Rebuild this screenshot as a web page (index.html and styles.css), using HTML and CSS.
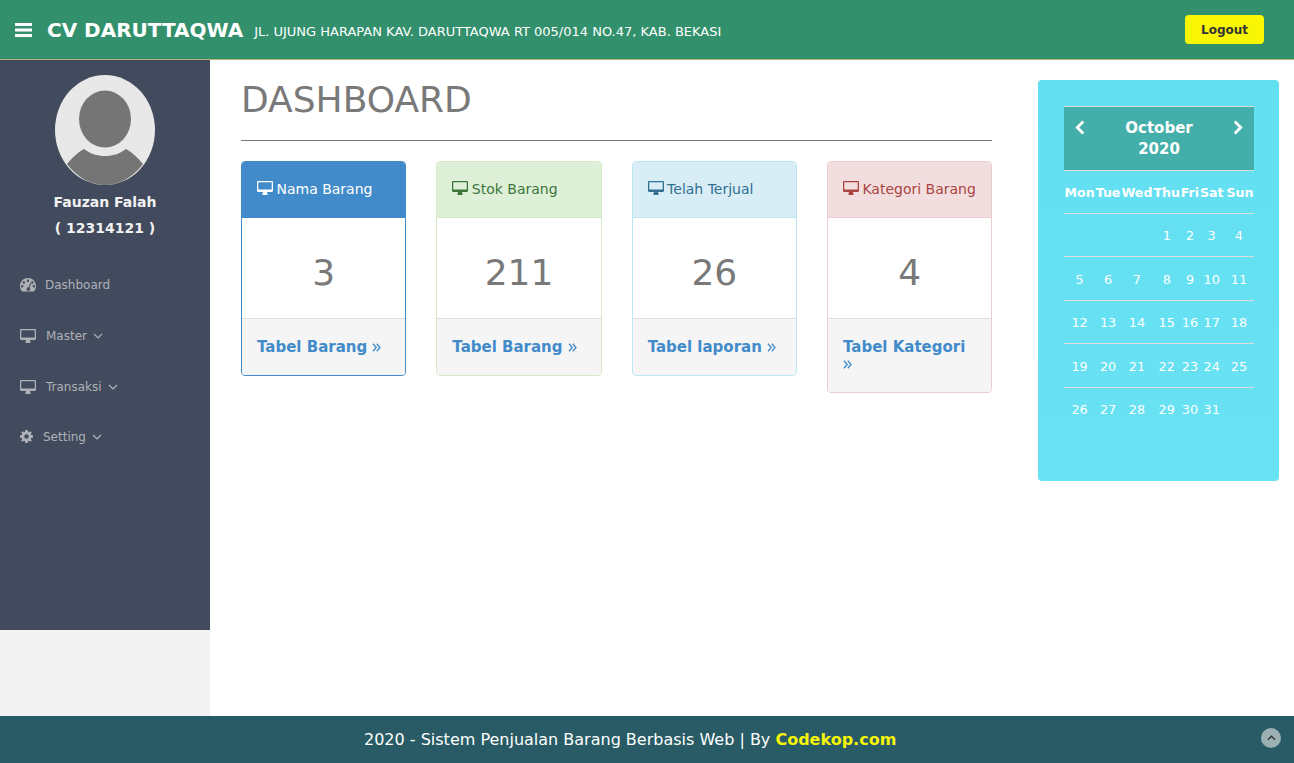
FILE: index.html
```html
<!DOCTYPE html>
<html lang="en">
<head>
    <meta charset="UTF-8">
    <meta name="viewport" content="width=device-width, initial-scale=1.0">
    <title>CV Daruttaqwa - Dashboard</title>
    <link rel="stylesheet" href="styles.css">
</head>
<body>
    <svg class="icon-defs" width="0" height="0">
        <symbol id="i-desktop" viewBox="0 0 16 14">
            <path d="M1.2 0h13.6c.7 0 1.2.5 1.2 1.2v8.6c0 .7-.5 1.2-1.2 1.2H10c0 .8.3 1.3.6 1.8.2.4 0 1.2-.6 1.2H6c-.6 0-.8-.8-.6-1.2.3-.5.6-1 .6-1.8H1.2C.5 11 0 10.500 0 9.800V1.200C0 .5.500 0 1.200 0zM1.300 1.300v7.200h13.400V1.300z" fill-rule="evenodd"/>
        </symbol>
    </svg>

    <header class="topbar">
        <svg class="burger" viewBox="0 0 17 14"><path d="M0 0h17v3H0zM0 5.500h17v3H0zM0 11h17v3H0z"/></svg>
        <span class="brand">CV DARUTTAQWA</span>
        <span class="address">JL. UJUNG HARAPAN KAV. DARUTTAQWA RT 005/014 NO.47, KAB. BEKASI</span>
        <a class="logout" href="#">Logout</a>
    </header>

    <div class="page">
        <aside class="sidebar">
            <div class="sidebar-inner">
                <svg class="avatar" viewBox="0 0 100 110">
                    <ellipse cx="50" cy="55" rx="50" ry="55" fill="#e8e8e8"/>
                    <ellipse cx="50" cy="44" rx="26" ry="28.500" fill="#757575"/>
                    <path d="M12 89C18 82 22 78 29 74C36 79 42 81 50 81C58 81 64 79 71 74C78 78 82 82 88 89C78 102 65 110 50 110C35 110 22 102 12 89Z" fill="#757575"/>
                </svg>
                <p class="user-name">Fauzan Falah</p>
                <p class="user-id">( 12314121 )</p>
                <ul class="menu">
                    <li class="menu-item">
                        <svg class="menu-icon gauge" viewBox="0 0 16 14"><path fill-rule="evenodd" d="M8 0C3.600 0 0 3.500 0 8c0 2.200.8 4.200 2.200 5.600h11.600C15.200 12.200 16 10.200 16 8c0-4.500-3.600-8-8-8zM8 1.500a1.200 1.200 0 1 1 0 2.400 1.200 1.200 0 0 1 0-2.400zM3.800 3.300a1.200 1.200 0 1 1 0 2.400 1.200 1.200 0 0 1 0-2.400zM2.200 7a1.200 1.200 0 1 1 0 2.400 1.200 1.200 0 0 1 0-2.400zM12.300 3.300a1.200 1.200 0 1 1 0 2.400 1.200 1.200 0 0 1 0-2.400zM13.800 7a1.200 1.200 0 1 1 0 2.400 1.200 1.200 0 0 1 0-2.400zM10.200 5.100l1 .4-1.600 4.300c.5.500.8 1.100.6 1.800-.3 1-1.300 1.500-2.300 1.200s-1.500-1.300-1.200-2.300c.3-.9 1.100-1.400 2-1.300z"/></svg>
                        <span>Dashboard</span>
                    </li>
                    <li class="menu-item">
                        <svg class="menu-icon"><use href="#i-desktop"/></svg>
                        <span>Master</span>
                        <svg class="caret" viewBox="0 0 10 6"><path d="M1 1l4 4 4-4"/></svg>
                    </li>
                    <li class="menu-item">
                        <svg class="menu-icon"><use href="#i-desktop"/></svg>
                        <span>Transaksi</span>
                        <svg class="caret" viewBox="0 0 10 6"><path d="M1 1l4 4 4-4"/></svg>
                    </li>
                    <li class="menu-item">
                        <svg class="menu-icon cog" viewBox="0 0 14 14"><path fill-rule="evenodd" d="M5.700 0h2.600l.4 1.900 1 .4L11.400 1.300l1.300 1.300-1 1.700.4 1 1.900.4v2.600l-1.900.4-.4 1 1 1.700-1.300 1.300-1.700-1-1 .4L8.300 14H5.700l-.4-1.900-1-.4-1.700 1-1.300-1.300 1-1.700-.4-1L0 8.300V5.700l1.900-.4.4-1-1-1.700 1.300-1.300 1.700 1 1-.4zM7 4.600a2.400 2.400 0 1 0 0 4.800 2.400 2.400 0 0 0 0-4.800z"/></svg>
                        <span>Setting</span>
                        <svg class="caret" viewBox="0 0 10 6"><path d="M1 1l4 4 4-4"/></svg>
                    </li>
                </ul>
            </div>
        </aside>

        <main class="content">
            <h1 class="title">DASHBOARD</h1>
            <hr class="rule">
            <section class="cards">
                <div class="card card-primary">
                    <div class="card-head"><svg class="head-icon"><use href="#i-desktop"/></svg> Nama Barang</div>
                    <div class="card-body">3</div>
                    <div class="card-foot"><a href="#">Tabel Barang <svg class="dbl" viewBox="0 0 9 9"><path d="M1 .8l3.200 3.700L1 8.200M4.800 .8L8 4.500 4.800 8.200"/></svg></a></div>
                </div>
                <div class="card card-success">
                    <div class="card-head"><svg class="head-icon"><use href="#i-desktop"/></svg> Stok Barang</div>
                    <div class="card-body">211</div>
                    <div class="card-foot"><a href="#">Tabel Barang <svg class="dbl" viewBox="0 0 9 9"><path d="M1 .8l3.200 3.700L1 8.200M4.800 .8L8 4.500 4.800 8.200"/></svg></a></div>
                </div>
                <div class="card card-info">
                    <div class="card-head"><svg class="head-icon"><use href="#i-desktop"/></svg> Telah Terjual</div>
                    <div class="card-body">26</div>
                    <div class="card-foot"><a href="#">Tabel laporan <svg class="dbl" viewBox="0 0 9 9"><path d="M1 .8l3.200 3.700L1 8.200M4.800 .8L8 4.500 4.800 8.200"/></svg></a></div>
                </div>
                <div class="card card-danger">
                    <div class="card-head"><svg class="head-icon"><use href="#i-desktop"/></svg> Kategori Barang</div>
                    <div class="card-body">4</div>
                    <div class="card-foot"><a href="#">Tabel Kategori <svg class="dbl" viewBox="0 0 9 9"><path d="M1 .8l3.200 3.700L1 8.200M4.800 .8L8 4.500 4.800 8.200"/></svg></a></div>
                </div>
            </section>
        </main>

        <aside class="calendar-col">
            <div class="calendar">
                <div class="cal-head">
                    <svg class="cal-arrow" viewBox="0 0 9 14"><path d="M7.500 1.500L2 7l5.500 5.500"/></svg>
                    <span class="cal-month">October<br>2020</span>
                    <svg class="cal-arrow" viewBox="0 0 9 14"><path d="M1.500 1.500L7 7l-5.500 5.500"/></svg>
                </div>
                <table class="cal-table">
                    <thead>
                        <tr><th>Mon</th><th>Tue</th><th>Wed</th><th>Thu</th><th>Fri</th><th>Sat</th><th>Sun</th></tr>
                    </thead>
                    <tbody>
                        <tr><td></td><td></td><td></td><td>1</td><td>2</td><td>3</td><td>4</td></tr>
                        <tr><td>5</td><td>6</td><td>7</td><td>8</td><td>9</td><td>10</td><td>11</td></tr>
                        <tr><td>12</td><td>13</td><td>14</td><td>15</td><td>16</td><td>17</td><td>18</td></tr>
                        <tr><td>19</td><td>20</td><td>21</td><td>22</td><td>23</td><td>24</td><td>25</td></tr>
                        <tr><td>26</td><td>27</td><td>28</td><td>29</td><td>30</td><td>31</td><td></td></tr>
                    </tbody>
                </table>
            </div>
        </aside>
    </div>

    <footer class="footer">
        <span>2020 - Sistem Penjualan Barang Berbasis Web | By <b class="footer-link">Codekop.com</b></span>
        <a class="go-top" href="#"><svg viewBox="0 0 10 6"><path d="M1 5l4-4 4 4"/></svg></a>
    </footer>
</body>
</html>
```

FILE: styles.css
```css
* {
    box-sizing: border-box;
    margin: 0;
    padding: 0;
}

html, body {
    height: 100%;
}

body {
    display: flex;
    flex-direction: column;
    overflow: hidden;
    font-family: "DejaVu Sans", sans-serif;
    font-size: 14px;
    color: #797979;
    background-color: #fff;
}

.icon-defs {
    position: absolute;
}

.topbar {
    display: flex;
    align-items: center;
    height: 60px;
    flex-shrink: 0;
    padding: 0 30px 0 15px;
    background-color: #32906c;
    border-bottom: 1px solid #b5b27a;
    color: #fff;
}

.burger {
    width: 17px;
    height: 14px;
    fill: #fff;
    margin-right: 15px;
    margin-top: 1px;
}

.brand {
    font-size: 20px;
    font-weight: bold;
    margin-right: 11px;
}

.address {
    font-size: 13px;
    margin-top: 3px;
}

.logout {
    margin-left: auto;
    width: 79px;
    height: 29px;
    line-height: 30px;
    text-align: center;
    font-size: 12px;
    font-weight: bold;
    color: #333;
    text-decoration: none;
    background-color: #f8f505;
    border-radius: 4px;
}

.page {
    flex: 1;
    display: flex;
    min-height: 0;
}

.sidebar {
    width: 210px;
    flex-shrink: 0;
    background-color: #f2f2f2;
}

.sidebar-inner {
    height: 570px;
    padding-top: 15px;
    background-color: #424a5d;
    text-align: center;
}

.avatar {
    display: block;
    width: 100px;
    height: 110px;
    margin: 0 auto;
}

.user-name,
.user-id {
    font-size: 14px;
    font-weight: bold;
    line-height: 18px;
    margin-top: 8px;
    color: #f2f2f2;
}

.menu {
    list-style: none;
    margin-top: 22px;
    text-align: left;
}

.menu-item {
    display: flex;
    align-items: center;
    height: 51px;
    padding-left: 20px;
    font-size: 12px;
    color: #aeb2b7;
}

.menu-item:last-child {
    margin-top: -1px;
}

.menu-icon {
    width: 16px;
    height: 14px;
    fill: #aeb2b7;
    margin-right: 10px;
}

.menu-icon.gauge {
    margin-right: 9px;
}

.menu-icon.cog {
    width: 13px;
    height: 13px;
}

.caret {
    width: 10px;
    height: 6px;
    margin-left: 6px;
    fill: none;
    stroke: #aeb2b7;
    stroke-width: 1.200;
}

.content {
    width: 828px;
    flex-shrink: 0;
    padding: 16px 0 0 31px;
}

.title {
    font-size: 36px;
    font-weight: normal;
    line-height: 48px;
    color: #797979;
}

.rule {
    width: 751px;
    margin-top: 16px;
    border: 0;
    border-top: 1px solid #777;
}

.cards {
    display: grid;
    grid-template-columns: repeat(4, 165.330px);
    column-gap: 30px;
    align-items: start;
    margin-top: 20px;
}

.card {
    border: 1px solid;
    border-radius: 4px;
    overflow: hidden;
    background-color: #fff;
}

.card-head {
    height: 56px;
    line-height: 55px;
    padding-left: 15px;
    font-size: 14px;
    white-space: nowrap;
    border-bottom: 1px solid;
}

.head-icon {
    width: 16px;
    height: 14px;
    margin-right: -1px;
    vertical-align: -1px;
    fill: currentColor;
}

.card-body {
    height: 100px;
    line-height: 110px;
    text-align: center;
    font-size: 36px;
    color: #797979;
}

.card-foot {
    padding: 20px 15px 19px;
    background-color: #f5f5f5;
    border-top: 1px solid #ddd;
    font-size: 15px;
    line-height: 17px;
    font-weight: bold;
}

.card-foot a {
    color: #428bca;
    text-decoration: none;
}

.dbl {
    width: 9px;
    height: 9px;
    fill: none;
    stroke: #428bca;
    stroke-width: 1.300;
}

.card-primary { border-color: #428bca; }
.card-primary .card-head { background-color: #428bca; border-color: #428bca; color: #fff; }
.card-success { border-color: #d6e9c6; }
.card-success .card-head { background-color: #dff0d8; border-color: #d6e9c6; color: #3c763d; }
.card-info { border-color: #bce8f1; }
.card-info .card-head { background-color: #d9edf7; border-color: #bce8f1; color: #31708f; }
.card-danger { border-color: #ebccd1; }
.card-danger .card-head { background-color: #f2dede; border-color: #ebccd1; color: #a94442; }

.calendar-col {
    flex: 1;
    padding: 20px 15px 0 0;
}

.calendar {
    width: 241px;
    height: 401px;
    padding: 26px 25px 0 26px;
    background: linear-gradient(#62dff1, #69e2f3);
    border-radius: 4px;
    color: #fff;
}

.cal-head {
    display: flex;
    align-items: flex-start;
    justify-content: space-between;
    height: 65px;
    padding: 11px 11px 0;
    background-color: #44afaa;
    border-top: 1px solid #ddd;
    border-bottom: 1px solid #ddd;
}

.cal-arrow {
    width: 10px;
    height: 15px;
    margin-top: 2px;
    fill: none;
    stroke: #fff;
    stroke-width: 2.600;
}

.cal-month {
    font-size: 15px;
    font-weight: bold;
    line-height: 21px;
    text-align: center;
}

.cal-table {
    width: 190px;
    border-collapse: collapse;
    font-size: 12.800px;
}

.cal-table th {
    height: 42px;
    padding: 2px 0 0;
    font-size: 12.600px;
    font-weight: bold;
    text-align: center;
}

.cal-table th:last-child {
    padding-left: 2px;
}

.cal-table td {
    height: 43.500px;
    padding: 1.600px 0 0;
    text-align: center;
    border-top: 1px solid #ddd;
}

.footer {
    position: relative;
    flex-shrink: 0;
    height: 47px;
    line-height: 47px;
    padding-left: 364px;
    font-size: 16px;
    color: #fff;
    background-color: #285b65;
}

.footer-link {
    color: #f8f505;
}

.go-top {
    position: absolute;
    right: 13px;
    top: 12px;
    display: flex;
    align-items: center;
    justify-content: center;
    width: 20px;
    height: 20px;
    border-radius: 50%;
    background-color: #9ab0b3;
}

.go-top svg {
    width: 9px;
    height: 6px;
    fill: none;
    stroke: #333;
    stroke-width: 1.400;
}
```
